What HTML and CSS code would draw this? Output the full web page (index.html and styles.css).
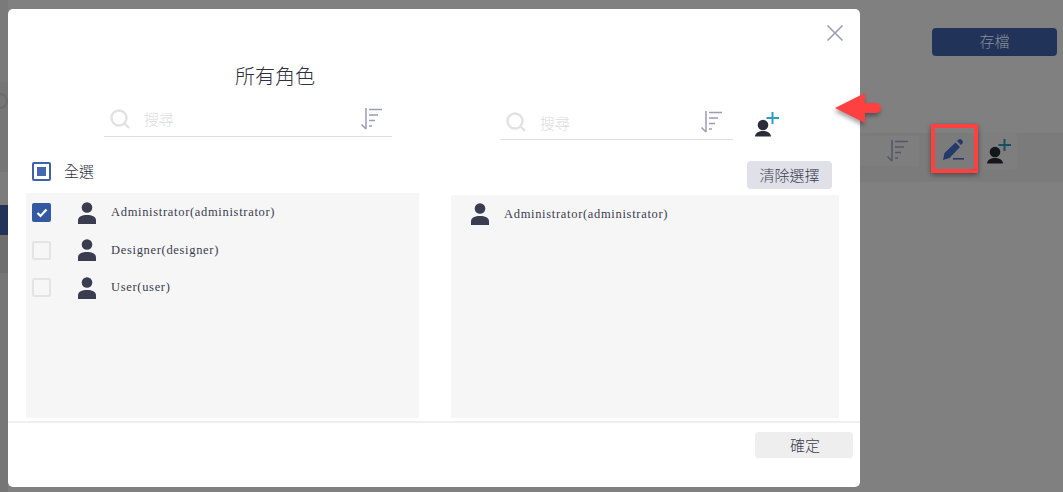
FILE: index.html
```html
<!DOCTYPE html>
<html lang="zh-Hant">
<head>
<meta charset="utf-8">
<title>所有角色</title>
<link rel="stylesheet" href="styles.css">
</head>
<body>
<div class="backdrop">
  <div class="side">
    <div class="s1"></div>
    <div class="s2"><span class="s-circle"></span></div>
    <div class="s3"></div>
    <div class="s4"></div>
    <div class="s5"></div>
    <div class="s6"></div>
  </div>
  <div class="band-tool"></div>
  <button class="save">存檔</button>
  <div class="bg-tools">
    <span class="bg-sort"><svg class="ico-sort" viewBox="0 0 24 24"><use href="#sort"/></svg></span>
    <span class="bg-edit"><svg viewBox="0 0 24 24" width="24" height="24"><path fill="#233a6b" d="M2 22l1.500-7L14.500 4.500l4.500 4.500L8.500 20zM16 3l1.300-1.200a2.400 2.400 0 0 1 3.400 0l.5.500a2.400 2.400 0 0 1 0 3.400L20 7z"/><rect x="12" y="20" width="11" height="1.600" fill="#233a6b"/></svg></span>
    <span class="bg-add"><svg width="26" height="26" viewBox="0 0 26 26"><use href="#useradd-dim"/></svg></span>
  </div>
</div>

<div class="highlight"></div>
<svg class="arrow" width="48" height="31" viewBox="0 0 48 31"><path d="M1 15 31 0v10h11a5 5 0 0 1 0 10H31v10z" fill="#ff4040"/></svg>

<svg class="defs" width="0" height="0">
  <defs>
    <symbol id="sort" viewBox="0 0 24 24">
      <path d="M7 1v21M2.500 17.500 7 22" fill="none" stroke="currentColor" stroke-width="1.500"/>
      <path d="M10 2.500h13M10 8h9M10 13.500h6M10 19h3" fill="none" stroke="currentColor" stroke-width="1.500"/>
    </symbol>
    <symbol id="user" viewBox="0 0 18 22">
      <circle cx="9" cy="5.500" r="5.300" fill="#3a3d4f"/>
      <path d="M0 22v-3.500C0 14.500 4 13 9 13s9 1.500 9 5.500V22z" fill="#3a3d4f"/>
    </symbol>
    <symbol id="useradd" viewBox="0 0 26 26">
      <circle cx="9" cy="14" r="5.300" fill="#2a2c38"/>
      <path d="M1 25.500c.5-4 4-5.500 8-5.500s7.500 1.500 8 5.500z" fill="#2a2c38"/>
      <path d="M18.500 1v12M12.500 7h12.500" stroke="#2f9cc4" stroke-width="2" fill="none"/>
    </symbol>
    <symbol id="useradd-dim" viewBox="0 0 26 26">
      <circle cx="9" cy="14" r="5.300" fill="#15161c"/>
      <path d="M1 25.500c.5-4 4-5.500 8-5.500s7.500 1.500 8 5.500z" fill="#15161c"/>
      <path d="M18.500 1v12M12.500 7h12.500" stroke="#174e62" stroke-width="2" fill="none"/>
    </symbol>
  </defs>
</svg>

<main class="modal">
  <button class="close" aria-label="關閉"><svg width="18" height="18" viewBox="0 0 18 18"><path d="M1.500 1.500l15 15M16.500 1.500l-15 15" stroke="#9b9db5" stroke-width="1.600" fill="none"/></svg></button>
  <div class="body">
    <section class="left">
      <h2 class="title">所有角色</h2>
      <div class="search search-left">
        <svg class="mag" viewBox="0 0 20 20"><circle cx="9" cy="9" r="7.500" fill="none" stroke="#e2e2e2" stroke-width="2.400"/><path d="M14.500 14.500l4.500 4.500" stroke="#e2e2e2" stroke-width="2.400"/></svg>
        <span class="ph">搜尋</span>
        <svg class="ico-sort" viewBox="0 0 24 24"><use href="#sort"/></svg>
      </div>
      <label class="all"><span class="cb cb-partial"><i></i></span><span class="all-text">全選</span></label>
      <ul class="list list-left">
        <li><span class="cb cb-checked"><svg width="12" height="10" viewBox="0 0 12 10"><path d="M1.500 5l3 3 6-6.500" stroke="#fff" stroke-width="2.200" fill="none"/></svg></span><svg class="user" viewBox="0 0 18 22"><use href="#user"/></svg><span class="name">Administrator(administrator)</span></li>
        <li><span class="cb"></span><svg class="user" viewBox="0 0 18 22"><use href="#user"/></svg><span class="name">Designer(designer)</span></li>
        <li><span class="cb"></span><svg class="user" viewBox="0 0 18 22"><use href="#user"/></svg><span class="name">User(user)</span></li>
      </ul>
    </section>
    <section class="right">
      <div class="right-top">
        <div class="search search-right">
          <svg class="mag" viewBox="0 0 20 20"><circle cx="9" cy="9" r="7.500" fill="none" stroke="#e2e2e2" stroke-width="2.400"/><path d="M14.500 14.500l4.500 4.500" stroke="#e2e2e2" stroke-width="2.400"/></svg>
          <span class="ph">搜尋</span>
          <svg class="ico-sort" viewBox="0 0 24 24"><use href="#sort"/></svg>
        </div>
        <svg class="add" width="26" height="26" viewBox="0 0 26 26"><use href="#useradd"/></svg>
      </div>
      <div class="clear-row"><button class="clear">清除選擇</button></div>
      <ul class="list list-right">
        <li><svg class="user" viewBox="0 0 18 22"><use href="#user"/></svg><span class="name">Administrator(administrator)</span></li>
      </ul>
    </section>
  </div>
  <footer class="foot"><button class="ok">確定</button></footer>
</main>
</body>
</html>
```
FILE: styles.css
```css
* { box-sizing: border-box; }
html, body { margin: 0; padding: 0; }
body {
  width: 1063px; height: 492px; overflow: hidden; position: relative;
  background: #808080;
  font-family: "Liberation Serif", "Noto Sans CJK TC", serif;
  color: #3a3d4f;
}
button { font: inherit; border: 0; padding: 0; }
ul { list-style: none; margin: 0; padding: 0; }
.defs { position: absolute; }

.backdrop { position: absolute; inset: 0; }
.side { position: absolute; left: 0; top: 0; width: 8px; height: 492px; display: flex; flex-direction: column; overflow: hidden; }
.s1 { height: 82px; background: #7a7a7a; }
.s2 { height: 90px; background: #767676; position: relative; }
.s-circle { position: absolute; left: -8px; top: 11px; width: 16px; height: 16px; border: 2px solid #6c6c6c; border-radius: 50%; }
.s3 { height: 33px; background: #7c7c7c; }
.s4 { height: 30px; background: #223359; }
.s5 { height: 38px; background: #6e6e6e; }
.s6 { flex: 1; background: #767676; }

.band-tool { position: absolute; left: 860px; right: 0; top: 133px; height: 49px; background: #7b7b7b; }
.save {
  position: absolute; left: 932px; top: 28px; width: 125px; height: 28px;
  background: #223359; color: #8b8f9b; border-radius: 4px; padding-bottom: 3px;
  font-family: "Noto Sans CJK TC", sans-serif; font-size: 15px; font-weight: 300;
}
.bg-tools { position: absolute; left: 860px; top: 132px; height: 38px; display: flex; align-items: center; }
.bg-sort { width: 59px; height: 30px; background: #7e7e7e; display: flex; align-items: center; justify-content: flex-end; padding-right: 10px; color: #55566a; }
.bg-edit { width: 61px; display: flex; align-items: center; padding: 0 0 2px 22px; }
.bg-add { width: 37px; height: 38px; background: #7e7e7e; border-radius: 4px; display: flex; align-items: center; justify-content: center; }

.highlight {
  position: absolute; left: 931px; top: 124px; width: 47px; height: 49px;
  border: 4px solid #ff4040; box-shadow: 0 2px 5px rgba(0,0,0,.4);
}
.arrow { position: absolute; left: 834px; top: 93px; filter: drop-shadow(-1px 3px 2px rgba(0,0,0,.35)); z-index: 3; }

.modal {
  position: absolute; left: 8px; top: 9px; width: 852px; height: 478px;
  background: #fff; border-radius: 5px; display: flex; flex-direction: column;
}
.close { position: absolute; right: 16px; top: 15px; background: none; width: 18px; height: 18px; display: flex; }
.body { flex: 1; display: flex; padding: 0 21px 0 18px; gap: 31px; min-height: 0; }
.left { width: 394px; display: flex; flex-direction: column; }
.right { flex: 1; display: flex; flex-direction: column; }
.title {
  margin: 53px 0 0; height: 27px; line-height: 27px; text-align: center;
  font-family: "Noto Sans CJK TC", sans-serif; font-weight: 300; font-size: 20px; color: #2e3040;
  padding-left: 104px;
}
.search { display: flex; align-items: center; height: 30px; border-bottom: 1px solid #dedede; padding-bottom: 5px; color: #9b9db5; }
.search-left { width: 288px; margin: 18px 0 0 78px; padding-left: 6px; padding-right: 9px; padding-bottom: 6px; }
.search-right { width: 233px; padding-left: 6px; padding-right: 10px; }
.mag { width: 20px; height: 20px; flex: none; }
.ph { font-family: "Noto Sans CJK TC", sans-serif; font-size: 15px; font-weight: 300; color: #dcdcdc; margin-left: 14px; flex: 1; }
.ico-sort { width: 24px; height: 24px; flex: none; display: block; }

.all { display: flex; align-items: center; gap: 13px; height: 25px; margin: 22px 0 0 6px; font-family: "Noto Sans CJK TC", sans-serif; font-size: 15px; font-weight: 300; color: #2e3040; }
.all-text { padding-bottom: 3px; }
.cb { width: 19px; height: 19px; flex: none; border: 2px solid #e4e4e4; border-radius: 2px; display: flex; align-items: center; justify-content: center; }
.cb-partial { border-color: #3d62a8; background: #fff; }
.cb-partial i { width: 9px; height: 9px; background: #4368b0; display: block; }
.cb-checked { border-color: #3459a3; background: #3459a3; }

.list { background: #f6f6f6; flex: none; height: 225px; }
.list-left { margin-top: 9px; width: 393px; padding-top: 1px; }
.list-left li { height: 37.500px; display: flex; align-items: center; padding-left: 6px; }
.list-left .user { margin-left: 27px; }
.list-right { margin-top: 6px; height: 223px; padding-top: 8px; }
.list-right li { height: 22px; display: flex; align-items: center; padding-left: 20px; }
.user { width: 18px; height: 22px; flex: none; }
.name { font-size: 12.500px; letter-spacing: .68px; color: #3a3d4f; margin-left: 15px; }
.list-right .name { margin-left: 15px; }

.right-top { margin-top: 101px; margin-left: 49px; display: flex; align-items: flex-end; }
.add { margin: 0 0 3px 21px; }
.clear-row { display: flex; justify-content: flex-end; margin-top: 21px; padding-right: 7px; }
.clear { width: 85px; height: 28px; background: #e0e0e8; border-radius: 4px; color: #3a3d4f; padding-bottom: 2px; font-family: "Noto Sans CJK TC", sans-serif; font-size: 15px; font-weight: 300; }

.foot { height: 66px; flex: none; border-top: 2px solid #efefef; margin-top: 3px; display: flex; justify-content: flex-end; padding: 9px 7px 0 0; }
.ok { width: 98px; height: 26px; background: #eee; border-radius: 3px; color: #3a3d4f; padding: 0 0 2px 2px; font-family: "Noto Sans CJK TC", sans-serif; font-size: 15px; font-weight: 300; }
```
